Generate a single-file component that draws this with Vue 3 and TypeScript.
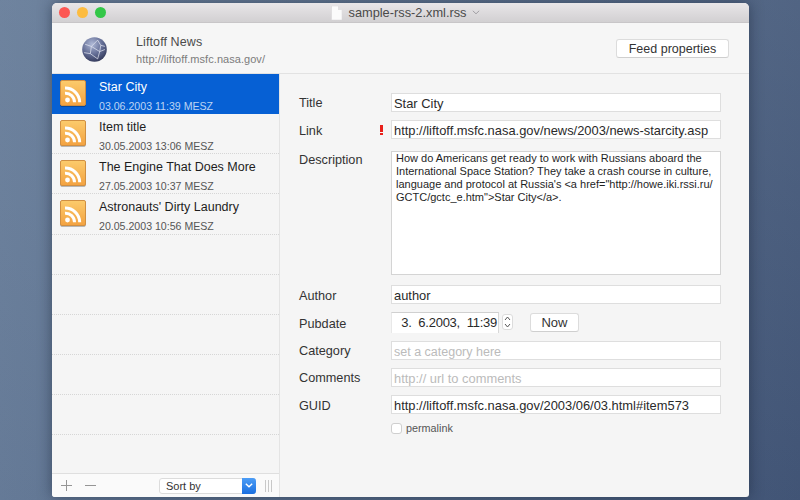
<script setup lang="ts">
interface Article {
  title: string
  date: string
}

const articles: Article[] = [
  { title: 'Star City', date: '03.06.2003 11:39 MESZ' },
  { title: 'Item title', date: '30.05.2003 13:06 MESZ' },
  { title: 'The Engine That Does More', date: '27.05.2003 10:37 MESZ' },
  { title: "Astronauts' Dirty Laundry", date: '20.05.2003 10:56 MESZ' },
]

const emptyRows = [1, 2, 3, 4, 5, 6]
const description = `How do Americans get ready to work with Russians aboard the
International Space Station? They take a crash course in culture,
language and protocol at Russia's <a href="http://howe.iki.rssi.ru/
GCTC/gctc_e.htm">Star City</a>.`
</script>

<template>
  <div class="desktop">
    <div class="window">
      <div class="titlebar">
        <div class="lights">
          <span class="light red" />
          <span class="light yellow" />
          <span class="light green" />
        </div>
        <div class="doc-title">
          <svg class="doc-icon" width="11" height="14" viewBox="0 0 11 14">
            <path d="M.5 0H7l4 4v10H.5z" fill="#fbfbfb" stroke="#d4d2d4" stroke-width=".5" />
            <path d="M7 0v4h4z" fill="#e2e1e3" />
          </svg>
          <span>sample-rss-2.xml.rss</span>
          <svg class="chevron" width="8" height="5" viewBox="0 0 8 5">
            <path d="M.8.8 4 3.8 7.2.8" fill="none" stroke="#a2a0a5" stroke-width="1" />
          </svg>
        </div>
      </div>

      <header class="feed-head">
        <svg class="globe" width="25" height="25" viewBox="0 0 24 24">
          <defs>
            <radialGradient id="globeFill" cx="40%" cy="28%" r="78%">
              <stop offset="0" stop-color="#aeb8d6" />
              <stop offset=".55" stop-color="#626c94" />
              <stop offset="1" stop-color="#2f3555" />
            </radialGradient>
          </defs>
          <circle cx="12" cy="12" r="11.8" fill="url(#globeFill)" />
          <path d="M3 7 9 9l6-6M9 9l-1 7 7 5M8 16l-6-1M15 21l2-7 5-2M17 14 9 9M15 3l3 5 4 1M18 8l-1 6" fill="none" stroke="#e6e9f4" stroke-width=".8" opacity=".85" />
        </svg>
        <div class="feed-info">
          <div class="feed-name">Liftoff News</div>
          <div class="feed-url">http://liftoff.msfc.nasa.gov/</div>
        </div>
        <button class="btn feed-btn" type="button">Feed properties</button>
      </header>

      <div class="body">
        <aside class="sidebar">
          <ul class="list">
            <li
              v-for="(item, i) in articles"
              :key="item.title"
              class="row"
              :class="{ selected: i === 0 }"
            >
              <svg class="rss" width="26" height="26" viewBox="0 0 26 26">
                <defs>
                  <linearGradient :id="`rssFill${i}`" x1="0" y1="0" x2="0" y2="1">
                    <stop offset="0" stop-color="#fccb6c" />
                    <stop offset="1" stop-color="#f3a241" />
                  </linearGradient>
                </defs>
                <rect x=".5" y=".5" width="25" height="25" rx="1.5" :fill="`url(#rssFill${i})`" stroke="#d08f42" />
                <circle cx="7.5" cy="20" r="2.4" fill="#fff" />
                <path d="M5 13.2a9 9 0 0 1 9.5 9M5 8a14.5 14.5 0 0 1 14.7 14.2" fill="none" stroke="#fff" stroke-width="3" />
              </svg>
              <div class="row-text">
                <div class="row-title">{{ item.title }}</div>
                <div class="row-date">{{ item.date }}</div>
              </div>
            </li>
            <li v-for="n in emptyRows" :key="n" class="row empty" />
          </ul>
          <div class="list-footer">
            <svg class="tool" width="11" height="11" viewBox="0 0 11 11">
              <path d="M5.5 0v11M0 5.5h11" stroke="#959595" stroke-width="1" />
            </svg>
            <svg class="tool minus" width="11" height="11" viewBox="0 0 11 11">
              <path d="M0 5.5h11" stroke="#959595" stroke-width="1" />
            </svg>
            <div class="select">
              <span class="select-label">Sort by</span>
              <span class="select-arrow">
                <svg width="8" height="5" viewBox="0 0 8 5">
                  <path d="M.8.8 4 3.8 7.2.8" fill="none" stroke="#fff" stroke-width="1.4" />
                </svg>
              </span>
            </div>
            <div class="grip"><i /><i /><i /></div>
          </div>
        </aside>

        <main class="form">
          <div class="field f-title">
            <label>Title</label>
            <div class="input">Star City</div>
          </div>
          <div class="field f-link">
            <label>Link</label>
            <span class="warn" />
            <div class="input">http://liftoff.msfc.nasa.gov/news/2003/news-starcity.asp</div>
          </div>
          <div class="field f-desc">
            <label>Description</label>
            <div class="textarea">{{ description }}</div>
          </div>
          <div class="field f-author">
            <label>Author</label>
            <div class="input">author</div>
          </div>
          <div class="field f-date">
            <label>Pubdate</label>
            <div class="date-input">3.&nbsp; 6.2003,&nbsp; 11:39</div>
            <div class="stepper">
              <svg width="7" height="14" viewBox="0 0 7 14">
                <path d="M1 5 3.5 2 6 5M1 9l2.5 3L6 9" fill="none" stroke="#555" stroke-width="1" />
              </svg>
            </div>
            <button class="btn now-btn" type="button">Now</button>
          </div>
          <div class="field f-cat">
            <label>Category</label>
            <div class="input placeholder">set a category here</div>
          </div>
          <div class="field f-comments">
            <label>Comments</label>
            <div class="input placeholder">http:// url to comments</div>
          </div>
          <div class="field f-guid">
            <label>GUID</label>
            <div class="input">http://liftoff.msfc.nasa.gov/2003/06/03.html#item573</div>
          </div>
          <div class="permalink">
            <span class="checkbox" />
            <span>permalink</span>
          </div>
        </main>
      </div>
    </div>
  </div>
</template>

<style>
html,
body {
  margin: 0;
  overflow: hidden;
}
</style>

<style scoped>
.desktop {
  width: 800px;
  height: 500px;
  box-sizing: border-box;
  padding: 3px 51px 3px 52px;
  background:
    linear-gradient(180deg, rgba(110, 130, 155, 0.28), rgba(30, 50, 85, 0.12)),
    linear-gradient(90deg, #6f84a0 0%, #5a6f8c 50%, #46597a 100%);
  font-family: "Liberation Sans", Arial, sans-serif;
  color: #2c2c2c;
}

.window {
  height: 494px;
  display: flex;
  flex-direction: column;
  border-radius: 5px 5px 3px 3px;
  overflow: hidden;
  background: #f5f5f5;
  box-shadow: 0 0 14px rgba(20, 30, 50, 0.5);
}

.titlebar {
  height: 19px;
  flex: none;
  display: flex;
  align-items: center;
  justify-content: center;
  position: relative;
  background: linear-gradient(#e8e6e8, #d2d0d2);
  border-bottom: 1px solid #c8c6c8;
}

.lights {
  position: absolute;
  left: 7px;
  top: 4px;
  display: flex;
  gap: 7px;
}

.light {
  width: 11px;
  height: 11px;
  border-radius: 50%;
}

.red { background: #fc5753; }
.yellow { background: #fdbc40; }
.green { background: #33c748; }

.doc-title {
  display: flex;
  align-items: center;
  margin-left: 10px;
  font-size: 12.8px;
  color: #4a4a4a;
}

.doc-icon { margin-right: 6px; }
.chevron { margin-left: 5px; }

.feed-head {
  height: 50px;
  flex: none;
  display: flex;
  align-items: center;
  background: #f6f6f6;
  border-bottom: 1px solid #e2e2e2;
}

.globe {
  margin-left: 30px;
  margin-top: 2px;
}

.feed-info {
  margin-left: 29px;
  flex: 1;
  padding-top: 3px;
}

.feed-name {
  font-size: 12.5px;
  color: #4c4c4c;
  letter-spacing: 0.1px;
}

.feed-url {
  font-size: 11px;
  color: #7c7c7c;
  margin-top: 4px;
  letter-spacing: 0.05px;
}

.btn {
  font: inherit;
  background: #fff;
  border: 1px solid #dcdcdc;
  border-bottom-color: #cfcfcf;
  border-radius: 3px;
  color: #333;
  padding: 0;
}

.feed-btn {
  width: 113px;
  height: 19px;
  font-size: 12.5px;
  margin-right: 20px;
  margin-top: 1px;
}

.body {
  flex: 1;
  display: flex;
  min-height: 0;
}

.sidebar {
  width: 227px;
  flex: none;
  display: flex;
  flex-direction: column;
  border-right: 1px solid #e4e4e4;
}

.list {
  flex: 1;
  margin: 0;
  padding: 0;
  list-style: none;
  overflow: hidden;
}

.row {
  height: 40.15px;
  box-sizing: border-box;
  display: flex;
  align-items: flex-start;
  padding: 6px 0 0 8px;
  border-bottom: 1px dotted #d6d6d6;
}

.row.selected {
  background: #0660d4;
  border-bottom: 0;
  color: #fff;
}

.rss {
  flex: none;
  filter: drop-shadow(0 1px 0.5px rgba(0, 0, 0, 0.25));
}

.row-text {
  margin-left: 13px;
  margin-top: -1px;
}

.row-title {
  font-size: 12.5px;
  line-height: 16px;
  color: #1d1d1d;
}

.row-date {
  font-size: 10.6px;
  line-height: 13px;
  margin-top: 5px;
  color: #555;
}

.selected .row-title { color: #fff; }
.selected .row-date { color: #bcd4f3; }

.list-footer {
  height: 23px;
  flex: none;
  display: flex;
  align-items: center;
  background: #fafafa;
  border-top: 1px solid #dfdfdf;
}

.tool { margin-left: 9px; }
.tool.minus { margin-left: 13px; }

.select {
  width: 95px;
  height: 14px;
  margin-left: 63px;
  display: flex;
  align-items: center;
  background: #fff;
  border: 1px solid #dcdcdc;
  border-radius: 3px;
}

.select-label {
  flex: 1;
  font-size: 11px;
  color: #333;
  padding-left: 6px;
}

.select-arrow {
  width: 14px;
  height: 16px;
  margin: -1px -1px -1px 0;
  display: flex;
  align-items: center;
  justify-content: center;
  background: linear-gradient(#4c9df6, #1a6fe0);
  border-radius: 0 3px 3px 0;
}

.grip {
  display: flex;
  gap: 2px;
  margin-left: 9px;
}

.grip i {
  width: 1px;
  height: 12px;
  background: #c8c8c8;
}

.form {
  flex: 1;
  padding: 19px 28px 0 19px;
  display: flex;
  flex-direction: column;
}

.field {
  display: flex;
  position: relative;
}

.field label {
  width: 92px;
  height: 19px;
  box-sizing: border-box;
  flex: none;
  color: #333;
  font-size: 12.7px;
  line-height: 18px;
  padding-top: 1px;
}

.input {
  flex: 1;
  height: 19px;
  box-sizing: border-box;
  background: #fff;
  border: 1px solid #dedede;
  padding: 1px 2px 0;
  font-size: 12.9px;
  line-height: 18px;
  color: #2a2a2a;
  white-space: nowrap;
  overflow: hidden;
}

.placeholder { color: #bbb; }
.f-cat .input { font-size: 12.5px; }

.warn {
  position: absolute;
  left: 81px;
  top: 5px;
  width: 2.5px;
  height: 10px;
  background: linear-gradient(#e8201a 0 7px, transparent 7px 8px, #e8201a 8px);
}

.f-link { margin-top: 8px; }
.f-desc { margin-top: 12px; }
.f-author { margin-top: 10px; }
.f-date { margin-top: 8px; }
.f-cat { margin-top: 8px; }
.f-comments { margin-top: 8px; }
.f-guid { margin-top: 8px; }

.f-link label,
.f-author label,
.f-guid label { padding-top: 2px; }
.f-desc label { padding-top: 0; }
.f-date label { padding-top: 3px; }

.textarea {
  flex: 1;
  height: 124px;
  box-sizing: border-box;
  background: #fff;
  border: 1px solid #d4d4d4;
  padding: 0 4px;
  font-size: 11px;
  line-height: 13px;
  color: #1f1f1f;
  white-space: pre;
}

.date-input {
  width: 108px;
  height: 21px;
  box-sizing: border-box;
  background: #fff;
  border-top: 1px solid #d0d0d0;
  border-right: 1px solid #d8d8d8;
  border-left: 1px solid #e8e8e8;
  text-align: right;
  padding-right: 1px;
  font-size: 13px;
  letter-spacing: -0.25px;
  line-height: 20px;
  color: #2a2a2a;
  white-space: nowrap;
}

.stepper {
  width: 11px;
  height: 16px;
  margin-left: 3px;
  margin-top: 2px;
  display: flex;
  align-items: center;
  justify-content: center;
  background: #fff;
  border: 1px solid #dcdcdc;
  border-radius: 3px;
  box-sizing: border-box;
}

.now-btn {
  width: 49px;
  height: 19px;
  margin-left: 17px;
  margin-top: 1px;
  font-size: 13px;
}

.permalink {
  display: flex;
  align-items: center;
  margin-top: 9px;
  margin-left: 92px;
  font-size: 10.8px;
  line-height: 11px;
  color: #555;
}

.checkbox {
  width: 9px;
  height: 9px;
  margin-right: 4px;
  background: #fff;
  border: 1px solid #cfcfcf;
  border-radius: 3px;
}
</style>
